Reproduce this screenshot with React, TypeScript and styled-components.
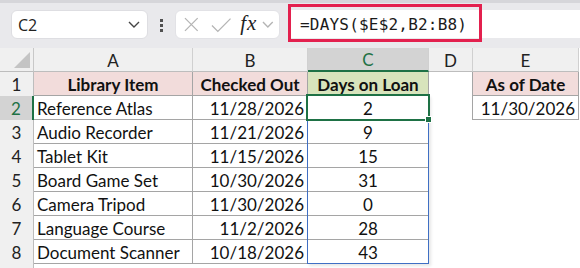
import React from 'react';
import styled, { createGlobalStyle } from 'styled-components';

const GlobalStyle = createGlobalStyle`
  html, body {
    margin: 0;
    padding: 0;
    background: #ffffff;
  }
  body {
    width: 580px;
    height: 268px;
    overflow: hidden;
  }
`;

type Loan = { item: string; out: string; days: number };

const loans: Loan[] = [
    { item: 'Reference Atlas', out: '11/28/2026', days: 2 },
    { item: 'Audio Recorder', out: '11/21/2026', days: 9 },
    { item: 'Tablet Kit', out: '11/15/2026', days: 15 },
    { item: 'Board Game Set', out: '10/30/2026', days: 31 },
    { item: 'Camera Tripod', out: '11/30/2026', days: 0 },
    { item: 'Language Course', out: '11/2/2026', days: 28 },
    { item: 'Document Scanner', out: '10/18/2026', days: 43 },
];

const columns = ['A', 'B', 'C', 'D', 'E'];
const GRID = '#a5a5a5';
const GREEN = '#1e7145';
const TRACKS = '34px 159px 115px 121px 44px 106px 1fr';

export default function App() {
    return (
        <>
            <GlobalStyle />
            <Window>
                <Toolbar>
                    <NameBox>
                        <span>C2</span>
                        <Chevron dark />
                    </NameBox>
                    <Grip>
                        <i />
                        <i />
                        <i />
                    </Grip>
                    <FnBox>
                        <svg width="15" height="15" viewBox="0 0 15 15">
                            <path d="M1 1 L14 14 M14 1 L1 14" stroke="#b4b4b4" strokeWidth="1.3" fill="none" />
                        </svg>
                        <svg width="21" height="16" viewBox="0 0 21 16">
                            <path d="M1 8.5 L7 14.5 L20 1.5" stroke="#b4b4b4" strokeWidth="1.3" fill="none" />
                        </svg>
                        <Fx>fx</Fx>
                        <Chevron />
                    </FnBox>
                    <FormulaBar>
                        <Highlight />
                        <FormulaText>=DAYS($E$2,B2:B8)</FormulaText>
                    </FormulaBar>
                </Toolbar>

                <SheetArea>
                    <Sheet>
                        <Corner>
                            <svg width="16" height="16" viewBox="0 0 16 16">
                                <path d="M0 16 L16 16 L16 0 Z" fill="#c4c4c4" />
                            </svg>
                        </Corner>
                        {columns.map((c) => (
                            <ColHead key={c} $active={c === 'C'}>
                                {c}
                            </ColHead>
                        ))}
                        <Blank />

                        <RowHead>1</RowHead>
                        <Cell $fill="#f2dcdb" $bold $align="center" $right $bottom>
                            Library Item
                        </Cell>
                        <Cell $fill="#f2dcdb" $bold $align="center" $right $bottom>
                            Checked Out
                        </Cell>
                        <Cell $fill="#d8e4bc" $bold $align="center" $right $bottom>
                            Days on Loan
                        </Cell>
                        <Cell $right />
                        <Cell $fill="#f2dcdb" $bold $align="center" $right $bottom>
                            As of Date
                        </Cell>
                        <Blank />

                        {loans.map((l, i) => (
                            <React.Fragment key={l.item}>
                                <RowHead $active={i === 0}>{i + 2}</RowHead>
                                <Cell $right $bottom>{l.item}</Cell>
                                <Cell $align="right" $right $bottom>
                                    {l.out}
                                </Cell>
                                <Cell $align="center" $right $bottom>
                                    {l.days}
                                </Cell>
                                <Cell $right={i === 0} />
                                {i === 0 ? (
                                    <Cell $align="right" $right $bottom>
                                        11/30/2026
                                    </Cell>
                                ) : (
                                    <Cell />
                                )}
                                <Blank />
                            </React.Fragment>
                        ))}

                        <RowHead />
                        <Blank $span />
                    </Sheet>

                    <Overlay>
                        <SpillRange />
                        <Selection>
                            <FillHandle />
                        </Selection>
                    </Overlay>
                </SheetArea>
            </Window>
        </>
    );
}

const Window = styled.div`
    width: 580px;
    height: 268px;
    display: flex;
    flex-direction: column;
    overflow: hidden;
    background: #ffffff;
`;

const Toolbar = styled.div`
    height: 48px;
    box-sizing: border-box;
    flex-shrink: 0;
    display: flex;
    align-items: flex-start;
    padding: 7px 0 0 11px;
    background: #e9e9ec;
    border-top: 3px solid #d6d6da;
`;

const NameBox = styled.div`
    width: 137px;
    height: 29px;
    box-sizing: border-box;
    display: flex;
    align-items: center;
    justify-content: space-between;
    padding: 0 7px 0 6px;
    background: #ffffff;
    border: 1px solid #dedee2;
    border-radius: 6px;
    font-family: 'Open Sans', 'Liberation Sans', sans-serif;
    font-size: 16px;
    color: #222222;
`;

const Chevron = ({ dark }: { dark?: boolean }) => (
    <svg width="12" height="7" viewBox="0 0 12 7">
        <path d="M1 1 L6 6 L11 1" stroke={dark ? '#444444' : '#b4b4b4'} strokeWidth="1.4" fill="none" />
    </svg>
);

const Grip = styled.div`
    display: flex;
    flex-direction: column;
    gap: 2px;
    margin: 9px 0 0 12px;

    i {
        display: block;
        width: 3px;
        height: 3px;
        background: #505050;
    }
`;

const FnBox = styled.div`
    width: 105px;
    height: 29px;
    box-sizing: border-box;
    margin-left: 12px;
    display: flex;
    align-items: center;
    gap: 11px;
    padding: 0 5px 0 8px;
    background: #ffffff;
    border: 1px solid #e2e2e6;
    border-radius: 6px;

    svg:first-child {
        margin-right: 1px;
    }
`;

const Fx = styled.span`
    font-family: 'Liberation Serif', serif;
    font-style: italic;
    font-size: 21px;
    line-height: 1;
    color: #222222;
    letter-spacing: 1px;
    margin: -3px -6px 0 -2px;
`;

const FormulaBar = styled.div`
    position: relative;
    flex: 1;
    height: 28px;
    margin: 0 0 0 8px;
    display: flex;
    align-items: center;
    padding-left: 12px;
    background: #ffffff;
`;

const Highlight = styled.div`
    position: absolute;
    left: 0;
    top: -6px;
    width: 194px;
    height: 38px;
    box-sizing: border-box;
    border: 3px solid #e3204e;
`;

const FormulaText = styled.span`
    font-family: 'DejaVu Sans Mono', 'Liberation Mono', monospace;
    font-size: 16px;
    color: #1a1a1a;
    letter-spacing: 0.2px;
`;

const SheetArea = styled.div`
    position: relative;
    flex: 1;
    display: flex;
`;

const Sheet = styled.div`
    flex: 1;
    display: grid;
    grid-template-columns: ${TRACKS};
    grid-template-rows: repeat(9, 24px) 1fr;
    font-family: 'Lato', 'Liberation Sans', sans-serif;
    font-size: 17px;
    color: #111111;
`;

const Overlay = styled.div`
    position: absolute;
    inset: 0;
    display: grid;
    grid-template-columns: ${TRACKS};
    grid-template-rows: repeat(9, 24px) 1fr;
    pointer-events: none;
`;

const Corner = styled.div`
    box-sizing: border-box;
    display: flex;
    align-items: flex-end;
    justify-content: flex-end;
    padding: 0 3px 3px 0;
    background: #f0f0f0;
    border-right: 1px solid #c8c8c8;
    border-bottom: 1px solid #bdbdbd;
`;

const ColHead = styled.div<{ $active?: boolean }>`
    box-sizing: border-box;
    display: flex;
    align-items: center;
    justify-content: center;
    padding-top: 1px;
    background: ${(p) => (p.$active ? '#d3d3d3' : '#f0f0f0')};
    color: ${(p) => (p.$active ? GREEN : '#222222')};
    border-right: 1px solid #d0d0d0;
    border-bottom: ${(p) => (p.$active ? `2px solid ${GREEN}` : '1px solid #bdbdbd')};
`;

const RowHead = styled.div<{ $active?: boolean }>`
    box-sizing: border-box;
    display: flex;
    align-items: center;
    justify-content: center;
    padding-top: 1px;
    background: ${(p) => (p.$active ? '#d3d3d3' : '#f0f0f0')};
    color: ${(p) => (p.$active ? GREEN : '#222222')};
    border-right: ${(p) => (p.$active ? `2px solid ${GREEN}` : '1px solid #bdbdbd')};
`;

const Cell = styled.div<{
    $fill?: string;
    $bold?: boolean;
    $align?: 'left' | 'center' | 'right';
    $right?: boolean;
    $bottom?: boolean;
}>`
    box-sizing: border-box;
    display: flex;
    align-items: center;
    justify-content: ${(p) =>
        p.$align === 'center' ? 'center' : p.$align === 'right' ? 'flex-end' : 'flex-start'};
    padding: 2px 3px 0 3px;
    white-space: nowrap;
    overflow: hidden;
    background: ${(p) => p.$fill ?? '#ffffff'};
    font-weight: ${(p) => (p.$bold ? 700 : 400)};
    border-right: ${(p) => (p.$right ? `1px solid ${GRID}` : 'none')};
    border-bottom: ${(p) => (p.$bottom ? `1px solid ${GRID}` : 'none')};
`;

const Blank = styled.div<{ $span?: boolean }>`
    background: #ffffff;
    grid-column: ${(p) => (p.$span ? '2 / -1' : 'auto')};
`;

const SpillRange = styled.div`
    grid-column: 4;
    grid-row: 3 / 10;
    margin: -1px 0 0 -1px;
    border: 1px solid #3f6fc4;
    border-top: none;
    box-shadow: 2px 2px 3px rgba(0, 0, 0, 0.1);
`;

const Selection = styled.div`
    position: relative;
    grid-column: 4;
    grid-row: 3;
    margin: -2px -1px -1px -2px;
    border: 2px solid ${GREEN};
`;

const FillHandle = styled.div`
    position: absolute;
    right: -4px;
    bottom: -4px;
    width: 5px;
    height: 5px;
    background: ${GREEN};
    border: 1px solid #ffffff;
`;
